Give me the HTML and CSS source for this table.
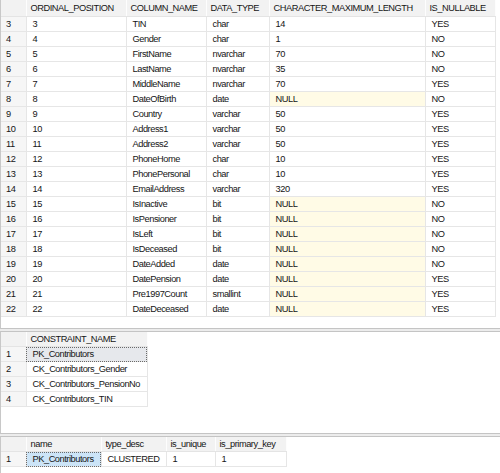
FILE: index.html
```html
<!DOCTYPE html>
<html>
<head>
<meta charset="utf-8">
<link rel="stylesheet" href="styles.css">
</head>
<body>
<div class="panel p1">
  <table class="grid g1">
    <colgroup><col class="c-rn1"><col class="c-ord"><col class="c-name"><col class="c-type"><col class="c-len"><col class="c-null"></colgroup>
    <thead><tr class="hdr-tall"><th></th><th>ORDINAL_POSITION</th><th>COLUMN_NAME</th><th>DATA_TYPE</th><th>CHARACTER_MAXIMUM_LENGTH</th><th>IS_NULLABLE</th></tr></thead>
    <tbody>
      <tr><td class="rn">3</td><td>3</td><td>TIN</td><td>char</td><td>14</td><td>YES</td></tr>
      <tr><td class="rn">4</td><td>4</td><td>Gender</td><td>char</td><td>1</td><td>NO</td></tr>
      <tr><td class="rn">5</td><td>5</td><td>FirstName</td><td>nvarchar</td><td>70</td><td>NO</td></tr>
      <tr><td class="rn">6</td><td>6</td><td>LastName</td><td>nvarchar</td><td>35</td><td>NO</td></tr>
      <tr><td class="rn">7</td><td>7</td><td>MiddleName</td><td>nvarchar</td><td>70</td><td>YES</td></tr>
      <tr><td class="rn">8</td><td>8</td><td>DateOfBirth</td><td>date</td><td class="null">NULL</td><td>NO</td></tr>
      <tr><td class="rn">9</td><td>9</td><td>Country</td><td>varchar</td><td>50</td><td>YES</td></tr>
      <tr><td class="rn">10</td><td>10</td><td>Address1</td><td>varchar</td><td>50</td><td>YES</td></tr>
      <tr><td class="rn">11</td><td>11</td><td>Address2</td><td>varchar</td><td>50</td><td>YES</td></tr>
      <tr><td class="rn">12</td><td>12</td><td>PhoneHome</td><td>char</td><td>10</td><td>YES</td></tr>
      <tr><td class="rn">13</td><td>13</td><td>PhonePersonal</td><td>char</td><td>10</td><td>YES</td></tr>
      <tr><td class="rn">14</td><td>14</td><td>EmailAddress</td><td>varchar</td><td>320</td><td>YES</td></tr>
      <tr><td class="rn">15</td><td>15</td><td>IsInactive</td><td>bit</td><td class="null">NULL</td><td>NO</td></tr>
      <tr><td class="rn">16</td><td>16</td><td>IsPensioner</td><td>bit</td><td class="null">NULL</td><td>NO</td></tr>
      <tr><td class="rn">17</td><td>17</td><td>IsLeft</td><td>bit</td><td class="null">NULL</td><td>NO</td></tr>
      <tr><td class="rn">18</td><td>18</td><td>IsDeceased</td><td>bit</td><td class="null">NULL</td><td>NO</td></tr>
      <tr><td class="rn">19</td><td>19</td><td>DateAdded</td><td>date</td><td class="null">NULL</td><td>NO</td></tr>
      <tr><td class="rn">20</td><td>20</td><td>DatePension</td><td>date</td><td class="null">NULL</td><td>YES</td></tr>
      <tr><td class="rn">21</td><td>21</td><td>Pre1997Count</td><td>smallint</td><td class="null">NULL</td><td>YES</td></tr>
      <tr><td class="rn">22</td><td>22</td><td>DateDeceased</td><td>date</td><td class="null">NULL</td><td>YES</td></tr>
    </tbody>
  </table>
</div>
<div class="split"></div>
<div class="panel p2">
  <table class="grid g2">
    <colgroup><col class="c-rn"><col class="c-cons"></colgroup>
    <thead><tr><th></th><th>CONSTRAINT_NAME</th></tr></thead>
    <tbody>
      <tr><td class="rn">1</td><td class="sel-grey">PK_Contributors</td></tr>
      <tr><td class="rn">2</td><td>CK_Contributors_Gender</td></tr>
      <tr><td class="rn">3</td><td>CK_Contributors_PensionNo</td></tr>
      <tr><td class="rn">4</td><td>CK_Contributors_TIN</td></tr>
    </tbody>
  </table>
</div>
<div class="split"></div>
<div class="panel p3">
  <table class="grid g3">
    <colgroup><col class="c-rn"><col class="c-iname"><col class="c-tdesc"><col class="c-uniq"><col class="c-pk"></colgroup>
    <thead><tr><th></th><th>name</th><th>type_desc</th><th>is_unique</th><th>is_primary_key</th></tr></thead>
    <tbody>
      <tr><td class="rn">1</td><td class="sel-blue">PK_Contributors</td><td>CLUSTERED</td><td>1</td><td>1</td></tr>
    </tbody>
  </table>
</div>
</body>
</html>
```

FILE: styles.css
```css
html, body {
  margin: 0;
  padding: 0;
  background: #ffffff;
}
body {
  width: 500px;
  height: 473px;
  overflow: hidden;
  font-family: "Liberation Sans", Arial, sans-serif;
  font-size: 9.25px;
  letter-spacing: -0.45px;
  color: #151515;
}
.panel {
  background: #ffffff;
  border-left: 1px solid #c8c8c8;
  box-sizing: border-box;
  overflow: hidden;
}
.p1 {
  height: 329px;
  border-bottom: 1px solid #c4c4c4;
}
.p2 {
  height: 103px;
  border-top: 1px solid #c4c4c4;
  border-bottom: 1px solid #c4c4c4;
}
.p3 {
  height: 37px;
  border-top: 1px solid #c4c4c4;
}
.split {
  height: 2px;
  background: #ececec;
}
.grid {
  border-collapse: collapse;
  table-layout: fixed;
}
.g1 { width: 494px; }
.g2 { width: 146px; }
.g3 { width: 285px; }
.grid th, .grid td {
  padding: 0;
  height: 14px;
  line-height: 14px;
  white-space: nowrap;
  overflow: hidden;
  text-align: left;
  font-weight: normal;
  vertical-align: middle;
}
.grid th {
  background: #f2f2f2;
  border-right: 1px solid #fdfdfd;
  border-bottom: 1px solid #e4e4e4;
  padding-left: 4px;
}
.grid .hdr-tall th {
  height: 16px;
  line-height: 16px;
}
.grid td {
  border-right: 1px solid #e6e6e6;
  border-bottom: 1px solid #e6e6e6;
  padding-left: 6px;
}
.grid td.rn {
  background: #f6f6f6;
  padding-left: 5px;
}
.grid td.null {
  background: #fffbe6;
}
.grid td.sel-grey {
  background: #e6e8ec;
  outline: 1px dotted #6a6a6a;
  outline-offset: -1px;
}
.grid td.sel-blue {
  background: #cce4f7;
  outline: 1px dotted #6a6a6a;
  outline-offset: -1px;
}
.c-rn1 { width: 25px; }
.c-rn { width: 25px; }
.c-ord { width: 100px; }
.c-name { width: 80px; }
.c-type { width: 63px; }
.c-len { width: 156px; }
.c-null { width: 70px; }
.c-cons { width: 121px; }
.c-iname { width: 75px; }
.c-tdesc { width: 65px; }
.c-uniq { width: 49px; }
.c-pk { width: 71px; }
```
